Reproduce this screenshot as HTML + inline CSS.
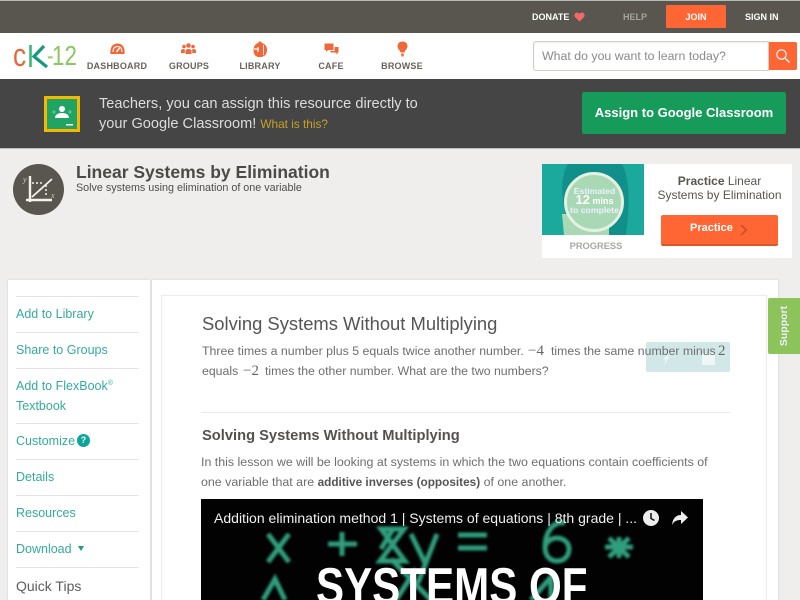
<!DOCTYPE html>
<html><head><meta charset="utf-8"><style>
html,body{margin:0;padding:0}
body{width:800px;height:600px;overflow:hidden;position:relative;background:#efeeec;font-family:"Liberation Sans",sans-serif}
div,span.a,svg.a,a{position:absolute;white-space:nowrap}
.nav{font-size:9px;font-weight:bold;color:#66635e;top:61px;line-height:10px;text-align:center;width:80px;letter-spacing:.2px}
.top{font-size:9px;font-weight:bold;color:#fff;top:12px;line-height:11px}
.side{left:16px;font-size:12.5px;color:#35ab9d;line-height:16px}
.hr{left:16px;width:123px;height:1px;background:#e4e4e2}
.p{font-size:12.3px;color:#6e6e6e;line-height:16px}
.m{font-family:"Liberation Serif",serif;font-size:15px;color:#666;line-height:16px}
</style></head><body>
<div style="left:0;top:0;width:800px;height:33px;background:#59564f;border-top:1px solid #bbb;box-sizing:border-box"></div>
<div class="top" style="left:532px">DONATE</div>
<svg class="a" style="left:574px;top:12px" width="11" height="10" viewBox="0 0 11 10"><path d="M5.500 9.500L1 5C-.5 3 1 .5 3 .5c1.200 0 2 .7 2.500 1.500C6 1.200 6.800.5 8 .5c2 0 3.500 2.500 2 4.500z" fill="#f2686a"/></svg>
<div class="top" style="left:623px;color:#a5a39e">HELP</div>
<div style="left:666px;top:5px;width:60px;height:23px;background:#ff6633;border-radius:1px"></div>
<div class="top" style="left:666px;width:60px;text-align:center">JOIN</div>
<div class="top" style="left:745px">SIGN IN</div>

<div style="left:0;top:33px;width:800px;height:46px;background:#fff"></div>
<div style="left:13px;top:36px;font-size:32px;line-height:38px;color:#e8663c;transform:scaleX(.82);transform-origin:left top">c</div>
<svg class="a" style="left:28px;top:44px" width="20" height="24" viewBox="0 0 20 24"><path d="M2.500 1v22" stroke="#3cb878" stroke-width="2.600" fill="none"/><path d="M16 2L6 12.500L19 23" stroke="#12997f" stroke-width="3.200" fill="none"/></svg>
<div style="left:47px;top:39px;font-size:28px;line-height:34px;color:#9ccf78;transform:scaleX(.7);transform-origin:left top">-</div>
<div style="left:52px;top:39px;font-size:28px;line-height:34px;color:#8cc665;transform:scaleX(.8);transform-origin:left top">12</div>

<svg class="a" style="left:110px;top:43px" width="15" height="12" viewBox="0 0 15 12"><path d="M.5 11C-.5 3 4 .5 7.500.5S15.500 3 14.500 11z" fill="#f0673a"/><path d="M3 9C3 5 5 3.500 7.500 3.500S12 5 12 9" stroke="#fff" stroke-width="1" fill="none"/><path d="M6.500 9L9.500 5" stroke="#fff" stroke-width="1.500"/></svg>
<div class="nav" style="left:77px">DASHBOARD</div>
<svg class="a" style="left:181px;top:43px" width="15" height="11" viewBox="0 0 15 11"><circle cx="7.500" cy="2.500" r="2.300" fill="#f0673a"/><circle cx="3" cy="3.500" r="1.800" fill="#f0673a"/><circle cx="12" cy="3.500" r="1.800" fill="#f0673a"/><path d="M4.500 11V7.500C5 5.500 10 5.500 10.500 7.500V11zM0 10V7.500C.5 5.800 3 5.800 3.800 6.500V10zM15 10V7.500C14.500 5.800 12 5.800 11.200 6.500V10z" fill="#f0673a"/></svg>
<div class="nav" style="left:149px">GROUPS</div>
<svg class="a" style="left:253px;top:41px" width="14" height="16" viewBox="0 0 14 16"><path d="M6 .5h2l1 1.500c3 1 5 3 5 6.500 0 4-1.500 7-6 7.500H5C2 15.500 .5 12.500 .5 9 .5 5 2.500 3 5 2z" fill="#f0673a"/><path d="M1 8h5M5 6v5" stroke="#fff" stroke-width="1.200"/><path d="M10.500 4v10" stroke="#fff" stroke-width=".8"/></svg>
<div class="nav" style="left:220px">LIBRARY</div>
<svg class="a" style="left:324px;top:43px" width="15" height="13" viewBox="0 0 15 13"><path d="M.5.500h9v6.500H4L2 9V7H.5z" fill="#f0673a"/><path d="M10.500 4h4v5.500h-1v2l-2-2H6.500V8h4z" fill="#f0673a"/></svg>
<div class="nav" style="left:291px">CAFE</div>
<svg class="a" style="left:397px;top:41px" width="11" height="16" viewBox="0 0 11 16"><path d="M5.500.5C8.500.5 10.500 2.500 10.500 5c0 3-2.500 4-3 6.500h-4c-.5-2.500-3-3.500-3-6.500C.5 2.500 2.500.5 5.500.5zM4 12.500h3L6.500 15.500h-2z" fill="#f0673a"/></svg>
<div class="nav" style="left:362px">BROWSE</div>

<div style="left:533px;top:41px;width:236px;height:30px;background:#fff;border:1px solid #cfcdc4;border-radius:3px 0 0 3px;box-sizing:border-box;box-shadow:inset 0 1px 2px #eee"></div>
<div style="left:542px;top:48px;font-size:12.350px;line-height:16px;color:#8a8a8a">What do you want to learn today?</div>
<div style="left:769px;top:42px;width:28px;height:28px;background:#ff6633;border-radius:0 2px 2px 0"></div>
<svg class="a" style="left:775px;top:48px" width="16" height="16" viewBox="0 0 16 16"><circle cx="6.500" cy="6.500" r="4.700" stroke="#fff" stroke-width="1.100" fill="none"/><path d="M10 10l4.500 4.500" stroke="#fff" stroke-width="1.300"/></svg>

<div style="left:0;top:79px;width:800px;height:69px;background:#454545;border-bottom:1px solid #bdbdbd"></div>
<div style="left:44px;top:96px;width:36px;height:36px;background:#f5b700"></div>
<div style="left:47px;top:99px;width:30px;height:30px;background:#1fa463"></div>
<svg class="a" style="left:47px;top:99px" width="30" height="30" viewBox="0 0 30 30"><circle cx="15" cy="10" r="3" fill="#fff"/><path d="M8 19c0-4 4-5 7-5s7 1 7 5z" fill="#fff"/><circle cx="7" cy="13" r="1.600" fill="#62c08d"/><circle cx="23" cy="13" r="1.600" fill="#62c08d"/><rect x="19" y="25" width="7" height="1.500" fill="#fff"/></svg>
<div style="left:99px;top:94px;font-size:14.600px;line-height:20px;color:#ddd">Teachers, you can assign this resource directly to</div>
<div style="left:99px;top:114px;font-size:14.600px;line-height:20px;color:#ddd">your Google Classroom! <span style="font-size:11.800px;color:#c9a227">What is this?</span></div>
<div style="left:582px;top:92px;width:204px;height:42px;background:#169b5a;border-radius:2px;color:#fff;font-size:13px;font-weight:bold;line-height:42px;text-align:center">Assign to Google Classroom</div>

<div style="left:13px;top:164px;width:51px;height:51px;border-radius:50%;background:#59564f"></div>
<svg class="a" style="left:22px;top:172px" width="36" height="36" viewBox="0 0 36 36"><path d="M8 4v26M4 28h26" stroke="#f2f2ee" stroke-width="2.400" fill="none"/><path d="M10 25L30 7" stroke="#f2f2ee" stroke-width="1.800"/><path d="M10 11h11M24 13v12" stroke="#f2f2ee" stroke-width="1.500" stroke-dasharray="2 2" fill="none"/><text x="1" y="10" font-size="8" font-style="italic" font-family="Liberation Serif" fill="#ccc">y</text><text x="29" y="26" font-size="8" font-style="italic" font-family="Liberation Serif" fill="#ccc">x</text></svg>
<div style="left:76px;top:161px;font-size:17.500px;font-weight:bold;line-height:22px;color:#4b4a47">Linear Systems by Elimination</div>
<div style="left:76px;top:181px;font-size:10.750px;line-height:15px;color:#4f4e4b">Solve systems using elimination of one variable</div>

<div style="left:542px;top:164px;width:250px;height:94px;background:#fff"></div>
<div style="left:542px;top:164px;width:102px;height:71px;background:#1aa99c;overflow:hidden">
<svg class="a" style="left:0;top:0" width="102" height="71" viewBox="0 0 102 71"><path d="M26 0H80C88 15 88 40 84 71H28C24 50 14 20 26 0z" fill="#118f8b"/><path d="M20 50L22 71H67V50z" fill="#a9d9b4"/></svg>
<div style="left:22px;top:8px;width:60px;height:60px;border-radius:50%;background:#a9d9b4;border:3px solid #e6efe2;box-sizing:border-box"></div>
<div style="left:0;top:22px;width:105px;text-align:center;color:#eef;font-size:8.700px;font-weight:bold;line-height:10px">Estimated</div>
<div style="left:0;top:30px;width:105px;text-align:center;color:#fff;font-size:9px;font-weight:bold;line-height:12px"><span style="font-size:13px">12</span> mins</div>
<div style="left:0;top:41px;width:105px;text-align:center;color:#eef;font-size:8.700px;font-weight:bold;line-height:10px">to complete</div>
</div>
<div style="left:542px;top:241px;width:108px;text-align:center;font-size:9.300px;font-weight:bold;line-height:11px;color:#a8a7a3">PROGRESS</div>
<div style="left:647px;top:174px;width:145px;text-align:center;font-size:12px;line-height:15px;color:#58564f"><b>Practice</b> Linear</div>
<div style="left:647px;top:188px;width:145px;text-align:center;font-size:12px;line-height:15px;color:#58564f">Systems by Elimination</div>
<div style="left:661px;top:215px;width:117px;height:31px;background:#ff6633;border-bottom:2px solid #d9562c;border-radius:2px;box-sizing:border-box"></div>
<div style="left:690px;top:221px;font-size:11px;font-weight:bold;line-height:14px;color:#fff">Practice</div>
<svg class="a" style="left:739px;top:224px" width="9" height="12" viewBox="0 0 9 12"><path d="M1 1l5 5-5 5h2.500l5-5-5-5z" fill="#c9512a"/></svg>

<div style="left:8px;top:280px;width:142px;height:320px;background:#fff;box-shadow:0 0 2px #ccc"></div>
<div style="left:152px;top:280px;width:626px;height:320px;background:#fff;box-shadow:0 0 2px #ccc"></div>
<div style="left:161px;top:295px;width:606px;height:305px;background:#fff;border:1px solid #ebebe9;box-sizing:border-box;border-bottom:0"></div>

<div class="hr" style="top:296px"></div>
<div class="side" style="top:306px">Add to Library</div>
<div class="hr" style="top:332px"></div>
<div class="side" style="top:342px">Share to Groups</div>
<div class="hr" style="top:368px"></div>
<div class="side" style="top:378px">Add to FlexBook<sup style="font-size:7px;line-height:0">®</sup></div>
<div class="side" style="top:398px">Textbook</div>
<div class="hr" style="top:423px"></div>
<div class="side" style="top:433px">Customize</div>
<div style="left:77px;top:434px;width:13px;height:13px;border-radius:50%;background:#0ba59a;color:#fff;font-size:9px;font-weight:bold;line-height:13px;text-align:center">?</div>
<div class="hr" style="top:459px"></div>
<div class="side" style="top:469px">Details</div>
<div class="hr" style="top:495px"></div>
<div class="side" style="top:505px">Resources</div>
<div class="hr" style="top:531px"></div>
<div class="side" style="top:541px">Download</div>
<svg class="a" style="left:78px;top:546px" width="6" height="5" viewBox="0 0 6 5"><path d="M0 0h6L3 5z" fill="#1d9c8f"/></svg>
<div class="hr" style="top:567px"></div>
<div style="left:16px;top:577px;font-size:14px;line-height:18px;color:#5d5d5d">Quick Tips</div>

<div style="left:202px;top:313px;font-size:18.400px;line-height:22px;color:#555">Solving Systems Without Multiplying</div>
<div style="left:646px;top:342px;width:84px;height:30px;background:#d2e8e8;border-radius:2px"></div>
<svg class="a" style="left:660px;top:350px" width="60" height="16" viewBox="0 0 60 16"><path d="M4 15l2-6-3 1 6-8-2 5 3-1z" fill="#eef6f6"/><rect x="42" y="3" width="13" height="12" fill="#eef6f6"/></svg>
<div class="p" style="left:202px;top:343px;font-size:12.350px">Three times a number plus 5 equals twice another number.</div>
<div class="m" style="left:528px;top:343px">−4</div>
<div class="p" style="left:551px;top:343px">times the same number minus</div>
<div class="m" style="left:718px;top:343px">2</div>
<div class="p" style="left:202px;top:363px">equals</div>
<div class="m" style="left:243px;top:363px">−2</div>
<div class="p" style="left:265px;top:363px">times the other number. What are the two numbers?</div>
<div style="left:201px;top:412px;width:529px;height:1px;background:#e8e8e6"></div>
<div style="left:202px;top:427px;font-size:14.700px;font-weight:bold;line-height:18px;color:#535250">Solving Systems Without Multiplying</div>
<div class="p" style="left:201px;top:454px;font-size:12.420px">In this lesson we will be looking at systems in which the two equations contain coefficients of</div>
<div class="p" style="left:201px;top:474px;font-size:12.420px">one variable that are <b style="color:#555;font-size:11.800px">additive inverses (opposites)</b> of one another.</div>

<div style="left:201px;top:499px;width:502px;height:101px;background:#020202;overflow:hidden">
<svg class="a" style="left:0;top:0" width="502" height="101" viewBox="0 0 502 101"><g fill="none" stroke="#2f9e7d" stroke-width="5" style="filter:blur(1.200px)">
<path d="M67 35L88 63M88 35L67 63"/>
<path d="M127 45H156M141 33V57"/>
<path d="M180 30H203L179 62H204zM180 50L192 30"/>
<path d="M210 35L224 64M236 35L217 84"/>
<path d="M257 36H286M257 49H286"/>
<path d="M364 24C350 22 344 36 344 48C344 58 350 62 356 62C364 62 368 56 368 50C368 43 362 39 356 39C350 39 345 43 344 48"/>
<path d="M404 48H432M408 39L428 58M428 39L408 58M418 38V59"/>
<path d="M62 101L74 80L84 101"/>
<path d="M190 60L230 101M195 101L215 70M330 101L350 78V101"/>
</g></svg>
<div style="left:13px;top:10px;font-size:14.030px;line-height:18px;color:#f0f0f0">Addition elimination method 1 | Systems of equations | 8th grade | ...</div>
<svg class="a" style="left:441px;top:10px" width="18" height="18" viewBox="0 0 18 18"><circle cx="9" cy="9" r="8" fill="#eee"/><path d="M9 4v5.500l3.500 2" stroke="#111" stroke-width="1.500" fill="none"/></svg>
<svg class="a" style="left:470px;top:11px" width="18" height="16" viewBox="0 0 18 16"><path d="M10 1l7 6.500-7 6.500V10C6 10 3 11 1 15 1.500 9 4.500 5 10 5z" fill="#eee"/></svg>
<div style="left:115px;top:58px;font-size:52px;font-weight:bold;line-height:60px;color:#fff;transform:scaleX(.81);transform-origin:left top">SYSTEMS OF</div>
</div>

<div style="left:768px;top:298px;width:32px;height:56px;background:#8cc35a;border-radius:2px 0 0 2px"></div>
<div style="left:756px;top:319px;width:56px;height:14px;line-height:14px;text-align:center;color:#eef;font-size:10.500px;font-weight:bold;transform:rotate(-90deg)">Support</div>
</body></html>
